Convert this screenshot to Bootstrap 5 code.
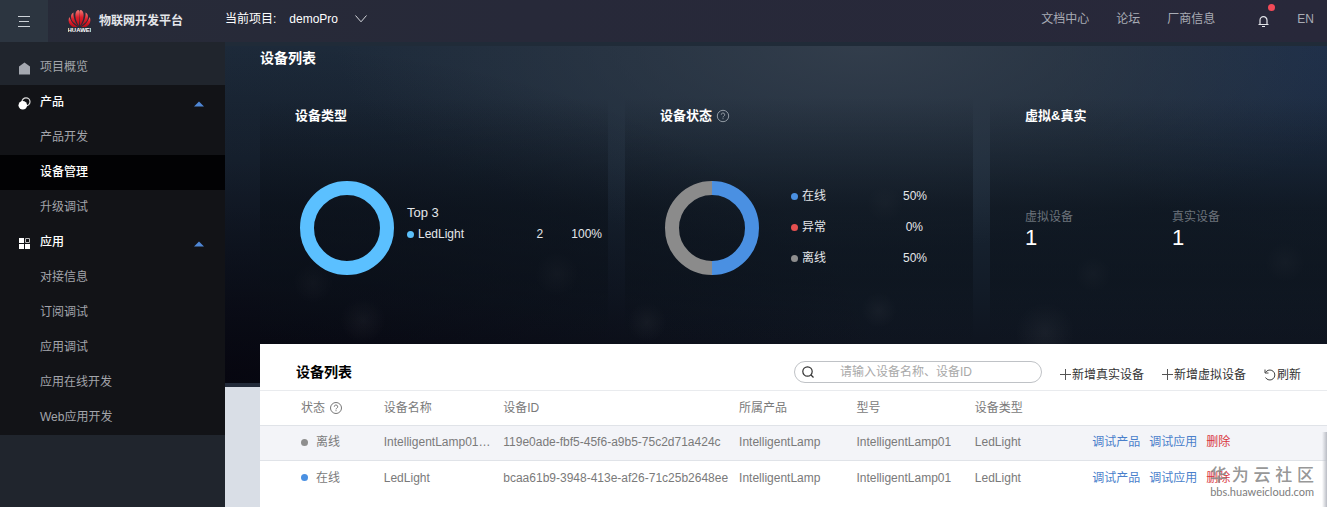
<!DOCTYPE html>
<html lang="zh-CN">
<head>
<meta charset="utf-8">
<meta name="viewport" content="width=device-width, initial-scale=1">
<title>物联网开发平台</title>
<link href="https://cdn.jsdelivr.net/npm/bootstrap@5.3.0/dist/css/bootstrap.min.css" rel="stylesheet">
<style>
body{font:12px/18px "Liberation Sans","Noto Sans CJK SC",sans-serif;background:#d9dee6;color:#e4e7ea;overflow-x:hidden}
a{text-decoration:none}
button{font:inherit;border:0;background:none;padding:0}
.topbar{height:42px;background:linear-gradient(90deg,#272b38,#272939 40%,#28283a)}
.menu-btn{width:48px;background:#2c3540;color:#cdd2d8}
.brand-link{color:#e4e6ea;width:157px;margin-left:20px;gap:8px}
.project-pick{color:#fff;gap:13px;padding-bottom:4px}
.top-links{gap:27px;margin-right:13px;padding-bottom:4px}
.top-links a{color:#a9acb5}
.bell-btn{width:14px;height:18px;margin-left:14px}
.bell-dot{width:7px;height:7px;background:#f24a58;top:-6px;left:12px}
.shell{min-height:calc(100vh - 42px)}
.sidebar{width:225px;background:#20252d;padding-top:8px}
.sidebar a,.sidebar button{display:flex;align-items:center;height:35px;width:100%;padding:0 21px 2px 40px;color:#a3a5ab;position:relative}
.sidebar .side-group{background:#121317}
.sidebar .group-btn{color:#fff;font-weight:500}
.sidebar svg.lead-icon{position:absolute;left:18px;top:12px}
.sidebar a.active{background:#020204;color:#fff;font-weight:500}
.stage{min-width:0;background:
 linear-gradient(#222a39,#222a39) 0 341px/100% 4px no-repeat,
 linear-gradient(#202b38,#202b38) 0 0/100% 4px no-repeat,
 radial-gradient(circle at 50% 50%,#ffffff0c,#fff0 70%) 115px 255px/46px 46px no-repeat,
 radial-gradient(circle at 50% 50%,#ffffff0c,#fff0 70%) 68px 221px/40px 40px no-repeat,
 radial-gradient(circle at 50% 50%,#ffffff0c,#fff0 70%) 310px 210px/44px 44px no-repeat,
 radial-gradient(circle at 50% 50%,#ffffff0b,#fff0 70%) 402px 260px/40px 40px no-repeat,
 radial-gradient(circle at 50% 50%,#ffffff0b,#fff0 70%) 636px 250px/36px 36px no-repeat,
 radial-gradient(circle at 50% 50%,#ffffff0b,#fff0 70%) 642px 144px/36px 36px no-repeat,
 radial-gradient(circle at 50% 50%,#ffffff0b,#fff0 70%) 850px 214px/36px 36px no-repeat,
 radial-gradient(circle at 50% 50%,#ffffff0c,#fff0 70%) 790px 260px/60px 60px no-repeat,
 radial-gradient(circle at 50% 50%,#ffffff0b,#fff0 70%) 1040px 200px/40px 40px no-repeat,
 radial-gradient(ellipse 60% 100% at 0 100%,#05040dcc,#05040d00) 0 0/100% 345px no-repeat,
 radial-gradient(ellipse 48% 60% at 58% 0,#343f4dee,#35404d00) 0 0/100% 345px no-repeat,
 radial-gradient(ellipse 25% 60% at 100% 0,#1d2f4dcc,#1d2f4d00) 0 0/100% 345px no-repeat,
 linear-gradient(180deg,#1d2a3a 0,#1b2938 35%,#121b27 72%,#0c0f19 100%) 0 0/100% 345px no-repeat,
 #d9dee6}
.hero{padding:7px 0 0 35px;height:302px}
.hero h1,.panel-head h2{font-size:14px;line-height:18px;font-weight:700;margin:0}
.hero h1{color:#fff}
.stat-cards{display:grid;grid-template-columns:348fr 348fr 337fr;gap:17px;margin-top:30px;height:247px}
.stat-card{padding:9px 6px 0 35px;background:linear-gradient(180deg,#0a101800 0,#0a101890 45%,#0a101878 75%,#0a101800 100%)}
.stat-card h3{font-size:13px;line-height:20px;font-weight:700;margin:0;color:#fff}
.chart-row{padding-left:5px;margin-top:55px}
.dot{display:inline-block;width:7px;height:7px;border-radius:50%;flex:none}
.sky{background:#5bc0fb}.blue{background:#4a90e2}.red{background:#e55050}.grey{background:#8e8e8e}
.top-legend{padding:22px 0 0 13px}
.top-label{font-size:13px;line-height:20px;margin-bottom:2px}
.status-list{gap:13px;margin:6px 40px 0 32px}
.counts{padding-top:82px;color:#6c737b}
.counts>div{width:147px}
.counts strong{display:block;font-size:22px;line-height:24px;font-weight:400;color:#fff}
.panel{background:#fff;margin-left:35px;color:#7a7a7a;min-height:163px;position:relative}
.panel-head{height:47px;border-bottom:1px solid #e9ebee;padding:9px 26px 0 36px;gap:18px}
.panel-head h2{color:#000}
.search-box{width:248px;height:22px;border:1px solid #bfc2c6;border-radius:11px;padding:0 8px 0 7px;color:#333}
.search-box input{border:0;outline:0;width:100%;margin-left:26px;padding:0;color:#555;background:none}
.search-box input::placeholder{color:#a9a9a9;opacity:1}
.tool-btn{color:#333;gap:1px;height:18px;margin-top:6px}
.device-table{table-layout:fixed;width:100%;border-collapse:separate;border-spacing:0}
.device-table th,.device-table td{height:35px;padding:0 8px 0 0;font-weight:400;white-space:nowrap;border-bottom:1px solid #e0e3e8}
.device-table td{padding-bottom:2px}
.device-table th:nth-child(3),.device-table td:nth-child(3){padding-right:0}
.device-table tr>:first-child{padding-left:41px}
.device-table tr:last-child td{border-bottom:0}
.device-table .shade td{background:#f3f4f8}
.device-table a{color:#4a7fcb;margin-right:9px}
.device-table a.remove{color:#d9363e}
.edge-shade{right:0;top:88px;bottom:0;width:5px;background:linear-gradient(90deg,#fff0,#b9bcc4)}
.watermark{right:13px;bottom:9px;color:#858585dd;pointer-events:none;font-size:17px;line-height:20px;font-weight:500}
.watermark small{display:block;font:11px/12px Lato,sans-serif;color:#7d7d7d}
</style>
</head>
<body>
<header class="topbar d-flex">
  <button class="menu-btn d-flex align-items-center justify-content-center flex-shrink-0" aria-label="菜单"><svg width="12" height="12" viewBox="0 0 12 12" stroke="currentColor"><path d="M0 1.500h12M1 6.500h10M0 11.500h12"/></svg></button>
  <a class="brand-link d-flex align-items-center fw-bold flex-shrink-0" href="#">
    <svg width="23" height="25" viewBox="0 0 23 25" role="img" aria-label="HUAWEI"><defs><linearGradient id="petal" x1="0" y1="0" x2="0" y2="1"><stop offset="0" stop-color="#ee7a76"/><stop offset=".45" stop-color="#df1f2b"/><stop offset="1" stop-color="#b30c18"/></linearGradient></defs>
      <g fill="url(#petal)"><path d="M11 17C7 11 6 3 9.500 1.200c1.700-.5 2.300 1 2 3.800z"/><path d="M12 17c4-6 5-14 1.500-15.800-1.700-.5-2.300 1-2 3.800z"/><path d="M10.500 17.500C7 14 5 7 5.500 3.500 2 5 2.500 10 5 13z"/><path d="M12.500 17.500C16 14 18 7 17.500 3.500 21 5 20.500 10 18 13z"/><path d="M10 18C6 16.500 2.500 12 1.500 8-1 12 2 16.500 5.500 18z"/><path d="M13 18c4-1.500 7.500-6 8.500-10 2.500 4-.5 8.500-4 10z"/></g>
      <text x="11.500" y="23" text-anchor="middle" font-family="Liberation Sans" font-size="6" font-weight="700" fill="#fff">HUAWEI</text></svg>
    <span>物联网开发平台</span>
  </a>
  <button class="project-pick d-flex align-items-center"><span>当前项目:</span><span>demoPro</span><svg class="ms-1" width="12" height="8" viewBox="0 0 12 8" fill="none" stroke="#d5d7dc"><path d="M.5.5 6 6.800 11.500.5"/></svg></button>
  <nav class="top-links d-flex align-items-center ms-auto">
    <a href="#">文档中心</a><a href="#">论坛</a><a href="#">厂商信息</a>
    <button class="bell-btn position-relative" aria-label="通知"><svg class="d-block mx-auto mt-1" width="11" height="13" viewBox="0 0 11 13" fill="none" stroke="#e3e5ea" stroke-width="1.200"><path d="M.5 9.500h10M2 9.500V5.200a3.500 3.500 0 0 1 7 0v4.300M4 11.500h3"/></svg><span class="bell-dot rounded-circle position-absolute"></span></button>
    <a href="#">EN</a>
  </nav>
</header>
<div class="shell d-flex">
  <aside class="sidebar flex-shrink-0">
    <a href="#"><svg class="lead-icon" width="13" height="13" viewBox="0 0 13 13"><path d="M6.500.5 12 4.500v8H1v-8z" fill="#a4a8b0"/></svg>项目概览</a>
    <div class="side-group">
      <button class="group-btn"><svg class="lead-icon" width="13" height="13" viewBox="0 0 13 13"><circle cx="8" cy="4.800" r="4" fill="none" stroke="#ddd" stroke-width="1.200"/><circle cx="4.800" cy="8.300" r="4.300" fill="#fff"/></svg>产品<svg class="ms-auto mt-1" width="10" height="6"><path d="M0 5.500 5 .5l5 5z" fill="#4f87d6"/></svg></button>
      <a href="#">产品开发</a><a class="active" href="#">设备管理</a><a href="#">升级调试</a>
      <button class="group-btn"><svg class="lead-icon" width="13" height="13" viewBox="0 0 13 13"><path d="M1 1h5v5H1zM1 7h5v5H1zM7 7h5v5H7z" fill="#fff"/><path d="M7.500 1.500h4v4h-4z" fill="none" stroke="#bbb"/></svg>应用<svg class="ms-auto mt-1" width="10" height="6"><path d="M0 5.500 5 .5l5 5z" fill="#4f87d6"/></svg></button>
      <a href="#">对接信息</a><a href="#">订阅调试</a><a href="#">应用调试</a><a href="#">应用在线开发</a><a href="#">Web应用开发</a>
    </div>
  </aside>
  <main class="stage flex-grow-1">
    <section class="hero">
      <h1>设备列表</h1>
      <div class="stat-cards">
        <article class="stat-card">
          <h3>设备类型</h3>
          <div class="chart-row d-flex">
            <svg class="flex-shrink-0" width="94" height="94"><circle cx="47" cy="47" r="40" fill="none" stroke="#5bc0ff" stroke-width="14"/></svg>
            <div class="top-legend flex-grow-1">
              <div class="top-label">Top 3</div>
              <div class="d-flex align-items-center gap-1"><span class="dot sky"></span><span>LedLight</span><span class="ms-auto">2</span><span class="ms-4">100%</span></div>
            </div>
          </div>
        </article>
        <article class="stat-card">
          <h3 class="d-flex align-items-center gap-1">设备状态<svg width="14" height="14" viewBox="0 0 14 14" fill="none" stroke="#929aa3"><circle cx="7" cy="7" r="5.700"/><path d="M5.300 5.700a1.700 1.700 0 1 1 2.500 1.500q-.8.400-.8 1.200M7 9.200v1"/></svg></h3>
          <div class="chart-row d-flex">
            <svg class="flex-shrink-0" width="94" height="94" fill="none" stroke-width="14"><path d="M47 7a40 40 0 0 1 0 80" stroke="#4a90e2"/><path d="M47 87a40 40 0 0 1 0-80" stroke="#8b8b8b"/></svg>
            <div class="status-list d-flex flex-column flex-grow-1">
              <div class="d-flex align-items-center gap-1"><span class="dot blue"></span>在线<span class="ms-auto">50%</span></div>
              <div class="d-flex align-items-center gap-1"><span class="dot red"></span>异常<span class="ms-auto pe-1">0%</span></div>
              <div class="d-flex align-items-center gap-1"><span class="dot grey"></span>离线<span class="ms-auto">50%</span></div>
            </div>
          </div>
        </article>
        <article class="stat-card">
          <h3>虚拟&amp;真实</h3>
          <div class="counts d-flex"><div>虚拟设备<strong>1</strong></div><div>真实设备<strong>1</strong></div></div>
        </article>
      </div>
    </section>
    <section class="panel">
      <div class="panel-head d-flex align-items-center">
        <h2>设备列表</h2>
        <label class="search-box d-flex align-items-center ms-auto"><svg class="flex-shrink-0" width="12" height="12" viewBox="0 0 12 12" fill="none" stroke="currentColor" stroke-width="1.200"><circle cx="5.500" cy="5.500" r="4.700"/><path d="m9 9 2.500 2.500"/></svg><input type="text" aria-label="搜索设备" placeholder="请输入设备名称、设备ID"></label>
        <button class="tool-btn d-flex align-items-center"><svg width="11" height="11" stroke="#555"><path d="M0 5.500h11M5.500 0v11"/></svg>新增真实设备</button>
        <button class="tool-btn d-flex align-items-center"><svg width="11" height="11" stroke="#555"><path d="M0 5.500h11M5.500 0v11"/></svg>新增虚拟设备</button>
        <button class="tool-btn d-flex align-items-center"><svg width="12" height="12" viewBox="0 0 12 12" fill="none" stroke="#444"><path d="M1.500 3.500A5 5 0 1 1 1.500 8.500M1 .5v3.500h3.500"/></svg>刷新</button>
      </div>
      <table class="device-table">
        <colgroup><col style="width:11.600%"><col style="width:11.200%"><col style="width:22.100%"><col style="width:11%"><col style="width:11.100%"><col style="width:11%"><col></colgroup>
        <thead><tr><th><span class="d-flex align-items-center gap-1">状态<svg width="14" height="14" viewBox="0 0 14 14" fill="none" stroke="#777"><circle cx="7" cy="7" r="5.500"/><path d="M5.300 5.700a1.700 1.700 0 1 1 2.500 1.500q-.8.400-.8 1.200M7 9.200v1"/></svg></span></th><th>设备名称</th><th>设备ID</th><th>所属产品</th><th>型号</th><th>设备类型</th><th aria-label="操作"></th></tr></thead>
        <tbody>
          <tr class="shade"><td><span class="d-flex align-items-center gap-2"><span class="dot grey"></span>离线</span></td><td>IntelligentLamp01…</td><td>119e0ade-fbf5-45f6-a9b5-75c2d71a424c</td><td>IntelligentLamp</td><td>IntelligentLamp01</td><td>LedLight</td><td><a href="#">调试产品</a><a href="#">调试应用</a><a class="remove" href="#">删除</a></td></tr>
          <tr><td><span class="d-flex align-items-center gap-2"><span class="dot blue"></span>在线</span></td><td>LedLight</td><td>bcaa61b9-3948-413e-af26-71c25b2648ee</td><td>IntelligentLamp</td><td>IntelligentLamp01</td><td>LedLight</td><td><a href="#">调试产品</a><a href="#">调试应用</a><a class="remove" href="#">删除</a></td></tr>
        </tbody>
      </table>
      <div class="edge-shade position-absolute"></div>
      <div class="watermark position-absolute text-end">华 为 云 社 区<small>bbs.huaweicloud.com</small></div>
    </section>
  </main>
</div>
<script src="https://cdn.jsdelivr.net/npm/bootstrap@5.3.0/dist/js/bootstrap.bundle.min.js"></script>
</body>
</html>
